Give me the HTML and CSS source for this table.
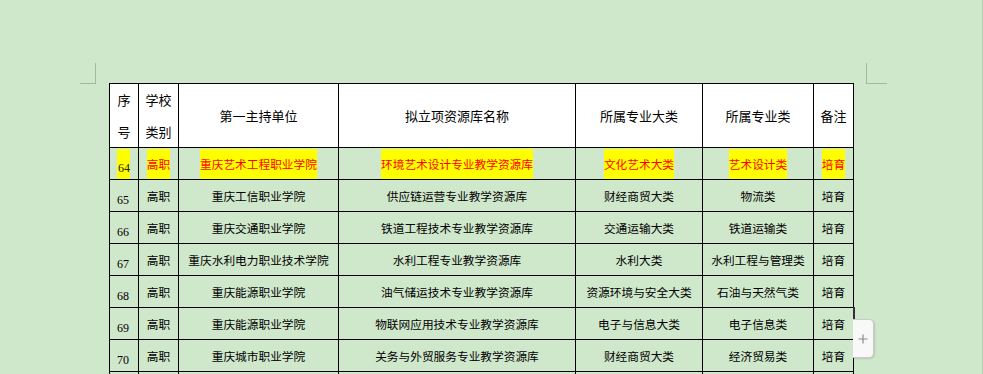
FILE: index.html
```html
<!DOCTYPE html>
<html lang="zh">
<head>
<meta charset="utf-8">
<title>资源库</title>
<link rel="stylesheet" href="styles.css">
</head>
<body>
<div class="page">
  <div class="sheet">
    <span class="corner corner-left"></span>
    <span class="corner corner-right"></span>
    <table class="grid">
      <colgroup>
        <col class="c1"><col class="c2"><col class="c3"><col class="c4"><col class="c5"><col class="c6"><col class="c7">
      </colgroup>
      <thead>
        <tr class="head">
          <th class="stack">序<br>号</th>
          <th class="stack">学校<br>类别</th>
          <th>第一主持单位</th>
          <th>拟立项资源库名称</th>
          <th>所属专业大类</th>
          <th>所属专业类</th>
          <th>备注</th>
        </tr>
      </thead>
      <tbody>
        <tr class="hl">
          <td class="num"><span class="mark mark-num">64</span></td>
          <td><span class="mark">高职</span></td>
          <td><span class="mark">重庆艺术工程职业学院</span></td>
          <td><span class="mark">环境艺术设计专业教学资源库</span></td>
          <td><span class="mark">文化艺术大类</span></td>
          <td><span class="mark">艺术设计类</span></td>
          <td><span class="mark">培育</span></td>
        </tr>
        <tr>
          <td class="num">65</td><td>高职</td><td>重庆工信职业学院</td><td>供应链运营专业教学资源库</td><td>财经商贸大类</td><td>物流类</td><td>培育</td>
        </tr>
        <tr>
          <td class="num">66</td><td>高职</td><td>重庆交通职业学院</td><td>铁道工程技术专业教学资源库</td><td>交通运输大类</td><td>铁道运输类</td><td>培育</td>
        </tr>
        <tr>
          <td class="num">67</td><td>高职</td><td>重庆水利电力职业技术学院</td><td>水利工程专业教学资源库</td><td>水利大类</td><td>水利工程与管理类</td><td>培育</td>
        </tr>
        <tr>
          <td class="num">68</td><td>高职</td><td>重庆能源职业学院</td><td>油气储运技术专业教学资源库</td><td>资源环境与安全大类</td><td>石油与天然气类</td><td>培育</td>
        </tr>
        <tr>
          <td class="num">69</td><td>高职</td><td>重庆能源职业学院</td><td>物联网应用技术专业教学资源库</td><td>电子与信息大类</td><td>电子信息类</td><td>培育</td>
        </tr>
        <tr>
          <td class="num">70</td><td>高职</td><td>重庆城市职业学院</td><td>关务与外贸服务专业教学资源库</td><td>财经商贸大类</td><td>经济贸易类</td><td>培育</td>
        </tr>
        <tr>
          <td class="num">&nbsp;</td><td></td><td></td><td></td><td></td><td></td><td></td>
        </tr>
      </tbody>
    </table>
    <span class="cursor"></span>
    <button class="add-row" type="button" aria-label="添加行">
      <svg width="10" height="10" viewBox="0 0 10 10" aria-hidden="true"><path d="M5 0.5V9.5M0.5 5H9.5" stroke="#8a8a8a" stroke-width="1.2" fill="none"/></svg>
    </button>
  </div>
</div>
</body>
</html>
```

FILE: styles.css
```css
html, body {
  margin: 0;
  padding: 0;
  background: #cfe7cb;
  overflow: hidden;
}

.page {
  width: 982px;
  height: 374px;
  border-right: 1px solid #b4cfb1;
  overflow: hidden;
  font-family: "Noto Sans CJK SC", "Noto Sans", sans-serif;
  color: #000;
}

.sheet {
  position: relative;
  padding: 83px 0 0 109px;
}

.corner {
  position: absolute;
  top: 63px;
  width: 15px;
  height: 20px;
  border-bottom: 1px solid #a3b8a0;
}
.corner-left {
  left: 80px;
  border-right: 1px solid #a3b8a0;
}
.corner-right {
  left: 866px;
  width: 20px;
  border-left: 1px solid #a3b8a0;
}

.grid {
  border-collapse: collapse;
  table-layout: fixed;
  width: 744px;
  position: relative;
}

.c1 { width: 29px; }
.c2 { width: 40px; }
.c3 { width: 160px; }
.c4 { width: 237px; }
.c5 { width: 127px; }
.c6 { width: 111px; }
.c7 { width: 40px; }

.grid th,
.grid td {
  border: 1px solid #000;
  padding: 0;
  text-align: center;
  vertical-align: middle;
  white-space: nowrap;
  overflow: hidden;
}

.grid th {
  background: #fff;
  font-weight: normal;
  font-size: 13px;
  height: 63px;
  line-height: 20px;
}

.grid th.stack {
  line-height: 31.5px;
  padding-bottom: 0;
}

.grid td {
  height: 31px;
  font-size: 11.7px;
  line-height: 16px;
}

.grid td.num {
  font-family: "Liberation Serif", "Times New Roman", serif;
  font-size: 12px;
  padding-top: 8px;
  height: 23px;
  text-align: left;
  padding-left: 7px;
  color: #000;
}

.hl td {
  color: #ff0000;
}
.hl td.num {
  padding-top: 0;
  height: 31px;
}

.mark {
  display: inline-block;
  background: #ffff00;
  line-height: 30px;
  height: 30px;
  vertical-align: middle;
}

.mark-num {
  color: #1a1a1a;
  padding-top: 4px;
  height: 26px;
  line-height: 30px;
  padding-left: 1px;
  padding-right: 0;
}

.cursor {
  position: absolute;
  left: 853px;
  top: 307px;
  width: 2px;
  height: 13px;
  background: #3b2a3c;
}

.add-row {
  position: absolute;
  left: 853px;
  top: 319px;
  width: 21px;
  height: 39px;
  padding: 0;
  margin: 0;
  background: #f8f8f8;
  border: 1px solid #c9c9c9;
  border-left: none;
  border-radius: 0 5px 5px 0;
  box-shadow: 1px 1px 2px rgba(0, 0, 0, 0.12);
  display: flex;
  align-items: center;
  justify-content: center;
}
```
